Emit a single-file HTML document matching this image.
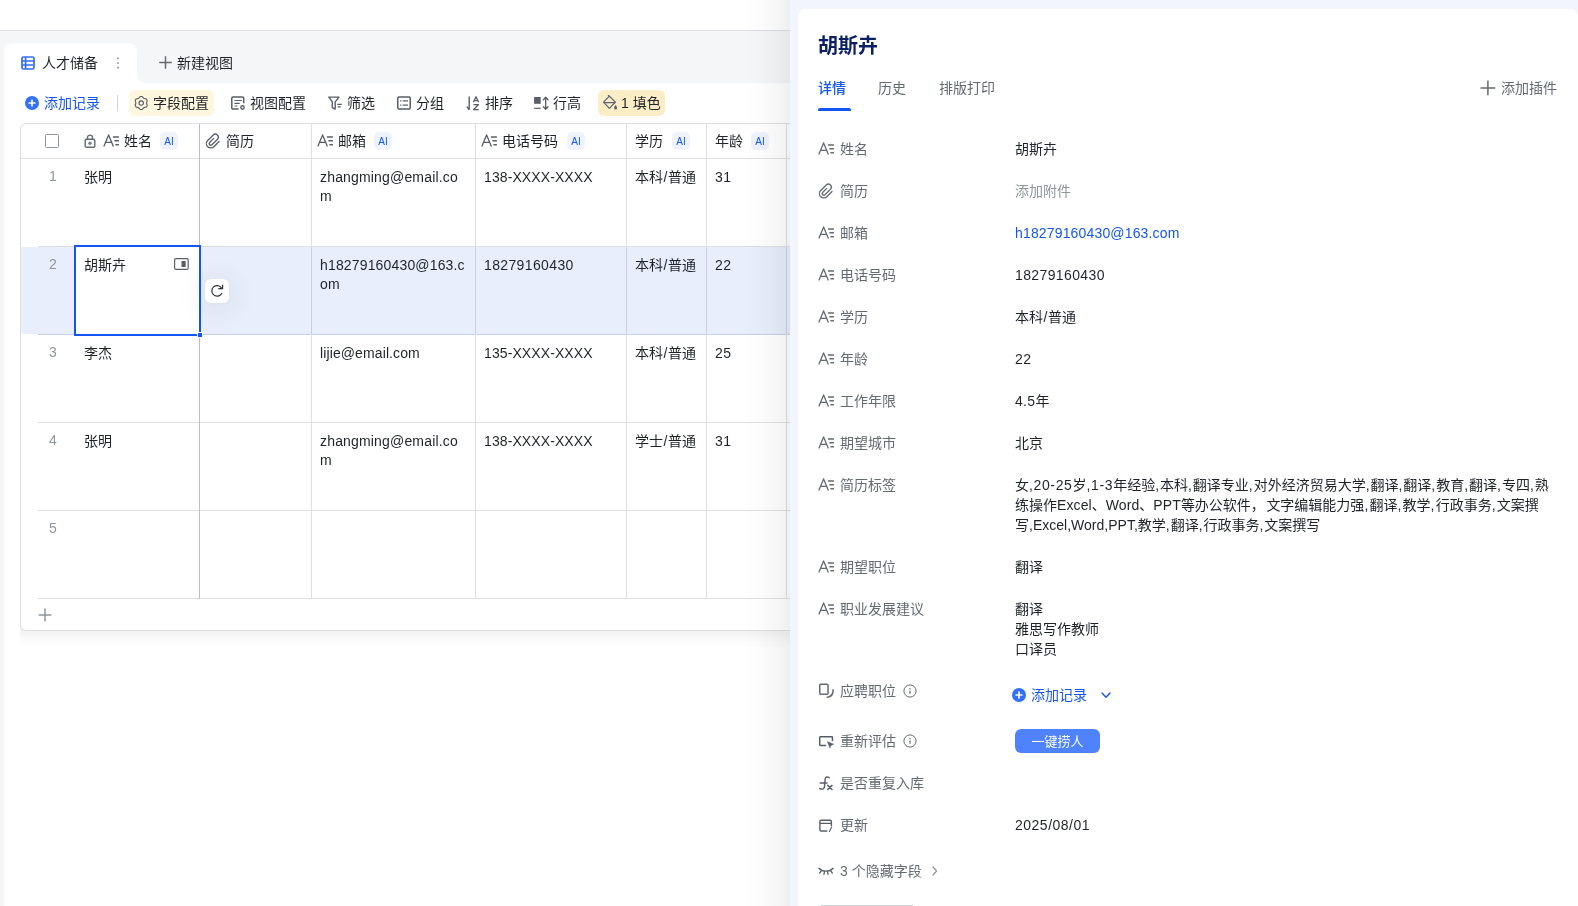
<!DOCTYPE html>
<html lang="zh-CN">
<head>
<meta charset="utf-8">
<title>人才储备</title>
<style>
*{box-sizing:border-box;margin:0;padding:0}
html,body{width:1578px;height:906px;overflow:hidden;background:#fff}
body{position:relative;font-family:"Liberation Sans","Noto Sans CJK SC",sans-serif;font-size:14px;line-height:20px;color:#1f2329}
#root{position:absolute;left:0;top:0;width:1578px;height:906px;will-change:transform}
.abs{position:absolute}
.t{position:absolute;white-space:nowrap;line-height:20px;height:20px}
svg{position:absolute;overflow:visible}
.btn{position:absolute;top:90px;height:26px;border-radius:6px}
.hl{position:absolute;height:1px;background:#dee0e3}
.vl{position:absolute;width:1px;background:#dee0e3}
.num{color:#8f959e;text-align:center;width:20px}
.ai{position:absolute;width:18px;height:18px;border-radius:5px;background:#eef3fe;color:#1456f0;font-size:10px;line-height:19px;text-align:center;top:132px}
.cell{position:absolute;line-height:19px;white-space:nowrap}
.lab{color:#646a73}
.val{color:#1f2329}
</style>
</head>
<body>
<div id="root">
<!-- base / grid view -->
<div class="abs" style="left:0px;top:30px;width:790px;height:1px;background:#dee0e3"></div>
<div class="abs" style="left:0px;top:31px;width:790px;height:52px;background:#f5f6f7"></div>
<div class="abs" style="left:0px;top:83px;width:4px;height:823px;background:#f5f6f7"></div>
<div class="abs" style="left:4px;top:43px;width:133px;height:40px;background:#fff;border-radius:8px 8px 0 0"></div>
<div class="abs" style="left:137px;top:75px;width:8px;height:8px;background:radial-gradient(circle at 100% 0,#f5f6f7 7.500px,#fff 8.500px)"></div>
<svg style="left:21px;top:56px" width="14" height="14" viewBox="0 0 14 14" fill="none" stroke="#336df4" stroke-width="1.7" ><rect x="1" y="1" width="12" height="12" rx="1.500"/><path d="M4.600 1v12M1 5h12M1 9h12"/></svg>
<div class="t" style="left:42px;top:53px;">人才储备</div>
<svg style="left:116px;top:57px" width="4" height="12" viewBox="0 0 4 12" fill="#737983"><circle cx="2" cy="1.300" r="0.850"/><circle cx="2" cy="6" r="0.850"/><circle cx="2" cy="10.700" r="0.850"/></svg>
<svg style="left:158.5px;top:56.4px" width="13" height="13" viewBox="0 0 13 13" fill="none" stroke="#646a73" stroke-width="1.5" ><path d="M6.500 0.200v12.600M0.200 6.500h12.600"/></svg>
<div class="t" style="left:177px;top:53px;">新建视图</div>
<!-- toolbar -->
<svg style="left:25px;top:96px" width="14" height="14" viewBox="0 0 14 14"><circle cx="7" cy="7" r="7" fill="#3370ff"/><path d="M7 4.200v5.600M4.200 7h5.600" stroke="#fff" stroke-width="1.700" stroke-linecap="round"/></svg>
<div class="t" style="left:44px;top:93px;color:#1456f0">添加记录</div>
<div class="abs" style="left:117px;top:95px;width:1px;height:16px;background:#d0d3d6"></div>
<div class="btn" style="left:129px;width:85px;background:#fef7dd"></div>
<svg style="left:134px;top:96px" width="14" height="14" viewBox="0 0 14 14" fill="none" stroke="#585e69" stroke-width="1.15" ><path d="M7.20 0.45L7.77 0.52L8.31 0.72L8.75 1.20L9.12 1.71L9.52 2.02L9.93 2.28L10.35 2.50L10.82 2.69L11.44 2.76L12.08 2.90L12.53 3.27L12.87 3.72L13.10 4.25L13.19 4.82L13.00 5.45L12.74 6.02L12.67 6.52L12.65 7.00L12.67 7.48L12.74 7.98L13.00 8.55L13.19 9.18L13.10 9.75L12.87 10.27L12.53 10.73L12.08 11.10L11.44 11.24L10.82 11.31L10.35 11.50L9.93 11.72L9.52 11.98L9.12 12.29L8.75 12.80L8.31 13.28L7.77 13.48L7.20 13.55L6.63 13.48L6.09 13.28L5.65 12.80L5.28 12.29L4.88 11.98L4.47 11.72L4.05 11.50L3.58 11.31L2.96 11.24L2.32 11.10L1.87 10.73L1.53 10.28L1.30 9.75L1.21 9.18L1.40 8.55L1.66 7.98L1.73 7.48L1.75 7.00L1.73 6.52L1.66 6.02L1.40 5.45L1.21 4.82L1.30 4.25L1.53 3.73L1.87 3.27L2.32 2.90L2.96 2.76L3.58 2.69L4.05 2.50L4.48 2.28L4.88 2.02L5.28 1.71L5.65 1.20L6.09 0.72L6.63 0.52Z" stroke-linejoin="round"/><circle cx="7.200" cy="7" r="2.200"/></svg>
<div class="t" style="left:153px;top:93px;">字段配置</div>
<svg style="left:231px;top:96px" width="14" height="14" viewBox="0 0 14 14" fill="none" stroke="#585e69" stroke-width="1.5" ><path d="M12.700 7.300V2.300a1.200 1.200 0 0 0-1.200-1.200H2a1.200 1.200 0 0 0-1.200 1.200v9.600a1.200 1.200 0 0 0 1.200 1.200h5.600"/><path d="M3.500 4.500h7.400M3.500 7.300h5.200M3.500 10h2.800" stroke-width="1.200"/><circle cx="11.500" cy="11.500" r="1.700" stroke-width="1.400"/></svg>
<div class="t" style="left:250px;top:93px;">视图配置</div>
<svg style="left:328px;top:96px" width="14" height="14" viewBox="0 0 14 14" fill="none" stroke="#585e69" stroke-width="1.4" stroke-linejoin="round"><path d="M0.800 1.100h10.200L7.200 5.900v7.200L4.300 11.600V5.900z"/><path d="M9.300 8.400h4.500M9.700 10.900h3" stroke-width="1.200"/></svg>
<div class="t" style="left:347px;top:93px;">筛选</div>
<svg style="left:397px;top:96px" width="14" height="14" viewBox="0 0 14 14" fill="none" stroke="#585e69" stroke-width="1.5" ><rect x="0.750" y="0.950" width="12.500" height="12.100" rx="1.200"/><path d="M3.100 4.900h1.300M5.700 4.900h5.300M3.100 9.100h1.300M5.700 9.100h5.300" stroke-width="1.300"/></svg>
<div class="t" style="left:416px;top:93px;">分组</div>
<svg style="left:466px;top:96px" width="14" height="15" viewBox="0 0 14 15" fill="none" stroke="#585e69" stroke-width="1.2" stroke-linejoin="round"><path d="M3.200 0.600v13.200M0.900 10.700l2.300 3.100" stroke-width="1.400"/><path d="M7.300 6.300l2.700-5.600 2.700 5.600M8.300 4.500h3.400" stroke-width="1.250"/><path d="M7.500 8.500h5L7.500 13.700h5.300" stroke-width="1.250"/></svg>
<div class="t" style="left:485px;top:93px;">排序</div>
<svg style="left:534px;top:96px" width="15" height="14" viewBox="0 0 15 14" fill="none" stroke="#585e69" stroke-width="1.3" ><rect x="0.100" y="1" width="6.600" height="6.800" fill="#585e69" stroke="none"/><path d="M0.100 12.300h6.600" stroke-width="1.200"/><path d="M11.700 1.400v11.600M9.400 3.700l2.300-2.500 2.300 2.500M9.400 10.700l2.300 2.500 2.300-2.500" stroke-linecap="round" stroke-linejoin="round"/></svg>
<div class="t" style="left:553px;top:93px;">行高</div>
<div class="btn" style="left:598px;width:67px;background:#fbeec6"></div>
<svg style="left:603px;top:95px" width="15" height="15" viewBox="0 0 15 15" fill="none" stroke="#5b6275" stroke-width="1.2" stroke-linejoin="round"><path d="M6.400 1.100l6 6.100-6 6.200L0.500 7.200z"/><path d="M5 0.200l1.600 1.600M0.900 7.600h11.200"/><path d="M12.600 10.100c.9 1.200 1.500 2 1.500 2.800a1.500 1.500 0 0 1-3 0c0-.8.600-1.600 1.500-2.800z" fill="#5b6275" stroke="none"/></svg>
<div class="t" style="left:621px;top:93px;">1 填色</div>
<!-- table -->
<div class="abs" style="left:20px;top:624px;width:770px;height:24px;background:linear-gradient(to bottom,rgba(31,35,41,.06) 25%,rgba(31,35,41,.03) 55%,rgba(31,35,41,0))"></div>
<div class="abs" style="left:20px;top:123px;width:780px;height:508px;border:1px solid #dee0e3;border-right:none;border-radius:6px 0 0 6px;background:#fff"></div>
<div class="abs" style="left:21px;top:247px;width:780px;height:87px;background:#e8eefc"></div>
<div class="hl" style="left:21px;top:158px;width:780px"></div>
<div class="hl" style="left:38px;top:246px;width:760px"></div>
<div class="hl" style="left:38px;top:334px;width:760px;background:#c8d0e6"></div>
<div class="hl" style="left:38px;top:422px;width:760px"></div>
<div class="hl" style="left:38px;top:510px;width:760px"></div>
<div class="hl" style="left:38px;top:598px;width:760px"></div>
<div class="vl" style="left:199px;top:124px;height:475px;background:#bbbfc4"></div>
<div class="vl" style="left:199px;top:247px;height:87px;background:#b3bbcf"></div>
<div class="vl" style="left:311px;top:124px;height:475px"></div>
<div class="vl" style="left:311px;top:247px;height:87px;background:#c8d0e6"></div>
<div class="vl" style="left:475px;top:124px;height:475px"></div>
<div class="vl" style="left:475px;top:247px;height:87px;background:#c8d0e6"></div>
<div class="vl" style="left:626px;top:124px;height:475px"></div>
<div class="vl" style="left:626px;top:247px;height:87px;background:#c8d0e6"></div>
<div class="vl" style="left:706px;top:124px;height:475px"></div>
<div class="vl" style="left:706px;top:247px;height:87px;background:#c8d0e6"></div>
<div class="vl" style="left:786px;top:124px;height:475px"></div>
<div class="vl" style="left:786px;top:247px;height:87px;background:#c8d0e6"></div>
<div class="abs" style="left:45px;top:134px;width:14px;height:14px;border:1.500px solid #8f959e;border-radius:1.500px;background:#fff"></div>
<svg style="left:84px;top:134px" width="12" height="14" viewBox="0 0 12 14" fill="none" stroke="#646a73" stroke-width="1.4" ><rect x="1.200" y="5.300" width="9.600" height="7.900" rx="1.300"/><path d="M3.500 5.300V3.600a2.500 2.500 0 0 1 5 0v1.700"/><circle cx="6" cy="9.300" r="1.700" fill="#7a808a" stroke="none"/></svg>
<svg style="left:103px;top:134px" width="17" height="13" viewBox="0 0 17 13" fill="none" stroke="#585e69" stroke-width="1.3" ><path d="M0.800 12.600L5.600 0.900l4.800 11.700M2.500 8.300h6.200" stroke-linejoin="round"/><path d="M9.900 3h6M11.400 6.800h4.500M12.400 10.700h3.500" stroke-width="1.600"/></svg>
<div class="t" style="left:124px;top:131px;">姓名</div>
<div class="ai" style="left:160px">AI</div>
<svg style="left:205px;top:133px" width="15" height="16" viewBox="0 0 15 16" fill="none" stroke="#585e69" stroke-width="1.3" stroke-linecap="round"><path d="M14 8.560L8.880 13.680A4.350 4.350 0 0 1 2.720 7.520L8.280 1.980A3 3 0 0 1 12.520 6.220L6.970 11.770A1.650 1.650 0 0 1 4.630 9.430L8.700 5.350"/></svg>
<div class="t" style="left:226px;top:131px;">简历</div>
<svg style="left:317px;top:134px" width="17" height="13" viewBox="0 0 17 13" fill="none" stroke="#585e69" stroke-width="1.3" ><path d="M0.800 12.600L5.600 0.900l4.800 11.700M2.500 8.300h6.200" stroke-linejoin="round"/><path d="M9.900 3h6M11.400 6.800h4.500M12.400 10.700h3.500" stroke-width="1.600"/></svg>
<div class="t" style="left:338px;top:131px;">邮箱</div>
<div class="ai" style="left:374px">AI</div>
<svg style="left:481px;top:134px" width="17" height="13" viewBox="0 0 17 13" fill="none" stroke="#585e69" stroke-width="1.3" ><path d="M0.800 12.600L5.600 0.900l4.800 11.700M2.500 8.300h6.200" stroke-linejoin="round"/><path d="M9.900 3h6M11.400 6.800h4.500M12.400 10.700h3.500" stroke-width="1.600"/></svg>
<div class="t" style="left:502px;top:131px;">电话号码</div>
<div class="ai" style="left:567px">AI</div>
<div class="t" style="left:635px;top:131px;">学历</div>
<div class="ai" style="left:672px">AI</div>
<div class="t" style="left:715px;top:131px;">年龄</div>
<div class="ai" style="left:751px">AI</div>
<div class="t num" style="left:43px;top:166px;">1</div>
<div class="cell" style="left:84px;top:168px">张明</div>
<div class="cell" style="left:320px;top:168px"><span style="letter-spacing:0.17px">zhangming@email.co<br>m</span></div>
<div class="cell" style="left:484px;top:168px"><span style="letter-spacing:0.1px">138-XXXX-XXXX</span></div>
<div class="cell" style="left:635px;top:168px">本科<span style="padding:0 .5px">/</span>普通</div>
<div class="cell" style="left:715px;top:168px"><span style="letter-spacing:0.4px">31</span></div>
<div class="t num" style="left:43px;top:254px;">2</div>
<div class="cell" style="left:320px;top:256px"><span style="letter-spacing:0.16px">h18279160430@163.c<br>om</span></div>
<div class="cell" style="left:484px;top:256px"><span style="letter-spacing:0.37px">18279160430</span></div>
<div class="cell" style="left:635px;top:256px">本科<span style="padding:0 .5px">/</span>普通</div>
<div class="cell" style="left:715px;top:256px"><span style="letter-spacing:0.4px">22</span></div>
<div class="t num" style="left:43px;top:342px;">3</div>
<div class="cell" style="left:84px;top:344px">李杰</div>
<div class="cell" style="left:320px;top:344px"><span style="letter-spacing:0.11px">lijie@email.com</span></div>
<div class="cell" style="left:484px;top:344px"><span style="letter-spacing:0.1px">135-XXXX-XXXX</span></div>
<div class="cell" style="left:635px;top:344px">本科<span style="padding:0 .5px">/</span>普通</div>
<div class="cell" style="left:715px;top:344px"><span style="letter-spacing:0.4px">25</span></div>
<div class="t num" style="left:43px;top:430px;">4</div>
<div class="cell" style="left:84px;top:432px">张明</div>
<div class="cell" style="left:320px;top:432px"><span style="letter-spacing:0.17px">zhangming@email.co<br>m</span></div>
<div class="cell" style="left:484px;top:432px"><span style="letter-spacing:0.1px">138-XXXX-XXXX</span></div>
<div class="cell" style="left:635px;top:432px">学士<span style="padding:0 .5px">/</span>普通</div>
<div class="cell" style="left:715px;top:432px"><span style="letter-spacing:0.4px">31</span></div>
<div class="t num" style="left:43px;top:518px;">5</div>
<div class="abs" style="left:74px;top:245px;width:127px;height:91px;border:2px solid #1456f0;background:#fff"></div>
<div class="cell" style="left:84px;top:256px">胡斯卉</div>
<svg style="left:174px;top:258px" width="15" height="12" viewBox="0 0 15 12" fill="none" stroke="#585e69" stroke-width="1.2" ><rect x="0.600" y="0.600" width="13.600" height="10.800" rx="1.500"/><rect x="7.500" y="3" width="4.200" height="6" fill="#585e69" stroke="none"/></svg>
<div class="abs" style="left:197px;top:332px;width:6px;height:6px;background:#1456f0;border:1px solid #fff"></div>
<div class="abs" style="left:205px;top:279px;width:24px;height:24px;border-radius:6px;background:#fff;box-shadow:0 4px 24px 8px rgba(31,35,41,.05),0 1px 4px rgba(31,35,41,.02)"></div>
<svg style="left:210px;top:284px" width="14" height="14" viewBox="0 0 14 14" fill="none" stroke="#2b2f36" stroke-width="1.2" stroke-linecap="round" stroke-linejoin="round"><path d="M11.740 9.420A5.300 5.300 0 1 1 11.900 4.610"/><path d="M12.600 1.100V4.700H8.800"/></svg>
<svg style="left:38px;top:608px" width="14" height="14" viewBox="0 0 14 14" fill="none" stroke="#8f959e" stroke-width="1.5" ><path d="M7 0.600v12.800M0.600 7h12.800"/></svg>
<!-- record detail panel -->
<div class="abs" style="left:730px;top:0px;width:60px;height:906px;background:linear-gradient(to right,rgba(31,35,41,0) 22%,rgba(31,35,41,.012) 45%,rgba(31,35,41,.035) 72%,rgba(31,35,41,.07))"></div>
<div class="abs" style="left:790px;top:0px;width:788px;height:906px;background:#f2f5fe"></div>
<div class="abs" style="left:798px;top:9px;width:780px;height:897px;background:#fff;border-radius:8px 8px 0 0"></div>
<div class="t" style="left:818px;top:32px;font-size:20px;line-height:28px;height:28px;font-weight:700;color:#0b1f66">胡斯卉</div>
<div class="t" style="left:818px;top:78px;color:#1456f0;font-weight:500">详情</div>
<div class="t lab" style="left:878px;top:78px;">历史</div>
<div class="t lab" style="left:939px;top:78px;">排版打印</div>
<div class="abs" style="left:818px;top:108px;width:33px;height:3px;background:#1456f0;border-radius:2px 2px 0 0"></div>
<svg style="left:1480px;top:80px" width="16" height="16" viewBox="0 0 16 16" fill="none" stroke="#646a73" stroke-width="1.5" ><path d="M7.900 0.500v14.800M0.500 7.900h14.800"/></svg>
<div class="t lab" style="left:1501px;top:78px;">添加插件</div>
<svg style="left:818px;top:142px" width="17" height="13" viewBox="0 0 17 13" fill="none" stroke="#646a73" stroke-width="1.3" ><path d="M0.800 12.600L5.600 0.900l4.800 11.700M2.500 8.300h6.200" stroke-linejoin="round"/><path d="M9.900 3h6M11.400 6.800h4.500M12.400 10.700h3.500" stroke-width="1.600"/></svg><div class="t lab" style="left:840px;top:139px;">姓名</div><div class="t val" style="left:1015px;top:139px;">胡斯卉</div>
<svg style="left:818px;top:183px" width="15" height="16" viewBox="0 0 15 16" fill="none" stroke="#646a73" stroke-width="1.3" stroke-linecap="round"><path d="M14 8.560L8.880 13.680A4.350 4.350 0 0 1 2.720 7.520L8.280 1.980A3 3 0 0 1 12.520 6.220L6.970 11.770A1.650 1.650 0 0 1 4.630 9.430L8.700 5.350"/></svg><div class="t lab" style="left:840px;top:181px;">简历</div><div class="t val" style="left:1015px;top:181px;color:#8f959e">添加附件</div>
<svg style="left:818px;top:226px" width="17" height="13" viewBox="0 0 17 13" fill="none" stroke="#646a73" stroke-width="1.3" ><path d="M0.800 12.600L5.600 0.900l4.800 11.700M2.500 8.300h6.200" stroke-linejoin="round"/><path d="M9.900 3h6M11.400 6.800h4.500M12.400 10.700h3.500" stroke-width="1.600"/></svg><div class="t lab" style="left:840px;top:223px;">邮箱</div><div class="t val" style="left:1015px;top:223px;color:#1456f0;letter-spacing:.16px">h18279160430@163.com</div>
<svg style="left:818px;top:268px" width="17" height="13" viewBox="0 0 17 13" fill="none" stroke="#646a73" stroke-width="1.3" ><path d="M0.800 12.600L5.600 0.900l4.800 11.700M2.500 8.300h6.200" stroke-linejoin="round"/><path d="M9.900 3h6M11.400 6.800h4.500M12.400 10.700h3.500" stroke-width="1.600"/></svg><div class="t lab" style="left:840px;top:265px;">电话号码</div><div class="t val" style="left:1015px;top:265px;letter-spacing:.38px">18279160430</div>
<svg style="left:818px;top:310px" width="17" height="13" viewBox="0 0 17 13" fill="none" stroke="#646a73" stroke-width="1.3" ><path d="M0.800 12.600L5.600 0.900l4.800 11.700M2.500 8.300h6.200" stroke-linejoin="round"/><path d="M9.900 3h6M11.400 6.800h4.500M12.400 10.700h3.500" stroke-width="1.600"/></svg><div class="t lab" style="left:840px;top:307px;">学历</div><div class="t val" style="left:1015px;top:307px;">本科<span style="padding:0 .5px">/</span>普通</div>
<svg style="left:818px;top:352px" width="17" height="13" viewBox="0 0 17 13" fill="none" stroke="#646a73" stroke-width="1.3" ><path d="M0.800 12.600L5.600 0.900l4.800 11.700M2.500 8.300h6.200" stroke-linejoin="round"/><path d="M9.900 3h6M11.400 6.800h4.500M12.400 10.700h3.500" stroke-width="1.600"/></svg><div class="t lab" style="left:840px;top:349px;">年龄</div><div class="t val" style="left:1015px;top:349px;letter-spacing:.4px">22</div>
<svg style="left:818px;top:394px" width="17" height="13" viewBox="0 0 17 13" fill="none" stroke="#646a73" stroke-width="1.3" ><path d="M0.800 12.600L5.600 0.900l4.800 11.700M2.500 8.300h6.200" stroke-linejoin="round"/><path d="M9.900 3h6M11.400 6.800h4.500M12.400 10.700h3.500" stroke-width="1.600"/></svg><div class="t lab" style="left:840px;top:391px;">工作年限</div><div class="t val" style="left:1015px;top:391px;"><span style="letter-spacing:.3px">4.5</span>年</div>
<svg style="left:818px;top:436px" width="17" height="13" viewBox="0 0 17 13" fill="none" stroke="#646a73" stroke-width="1.3" ><path d="M0.800 12.600L5.600 0.900l4.800 11.700M2.500 8.300h6.200" stroke-linejoin="round"/><path d="M9.900 3h6M11.400 6.800h4.500M12.400 10.700h3.500" stroke-width="1.600"/></svg><div class="t lab" style="left:840px;top:433px;">期望城市</div><div class="t val" style="left:1015px;top:433px;">北京</div>
<svg style="left:818px;top:478px" width="17" height="13" viewBox="0 0 17 13" fill="none" stroke="#646a73" stroke-width="1.3" ><path d="M0.800 12.600L5.600 0.900l4.800 11.700M2.500 8.300h6.200" stroke-linejoin="round"/><path d="M9.900 3h6M11.400 6.800h4.500M12.400 10.700h3.500" stroke-width="1.600"/></svg><div class="t lab" style="left:840px;top:475px;">简历标签</div><div class="abs val" style="left:1015px;top:475px;width:545px;line-height:20px;white-space:nowrap">女<span style="letter-spacing:0.63px">,20-25</span>岁<span style="letter-spacing:0.63px">,1-3</span>年经验<span style="letter-spacing:0.95px">,</span>本科<span style="letter-spacing:0.95px">,</span>翻译专业<span style="letter-spacing:0.95px">,</span>对外经济贸易大学<span style="letter-spacing:0.95px">,</span>翻译<span style="letter-spacing:0.95px">,</span>翻译<span style="letter-spacing:0.95px">,</span>教育<span style="letter-spacing:0.95px">,</span>翻译<span style="letter-spacing:0.95px">,</span>专四<span style="letter-spacing:0.95px">,</span>熟<br>练操作<span style="letter-spacing:0.1px">Excel</span>、<span style="letter-spacing:0.1px">Word</span>、<span style="letter-spacing:0.1px">PPT</span>等办公软件，<span style="margin-left:1.500px">文字编辑能力强<span style="letter-spacing:1.2px">,</span>翻译<span style="letter-spacing:1.2px">,</span>教学<span style="letter-spacing:1.2px">,</span>行政事务<span style="letter-spacing:1.2px">,</span>文案撰</span><br>写<span style="letter-spacing:0.01px">,Excel,Word,PPT,</span>教学<span style="letter-spacing:0.95px">,</span>翻译<span style="letter-spacing:0.95px">,</span>行政事务<span style="letter-spacing:0.95px">,</span>文案撰写</div>
<svg style="left:818px;top:560px" width="17" height="13" viewBox="0 0 17 13" fill="none" stroke="#646a73" stroke-width="1.3" ><path d="M0.800 12.600L5.600 0.900l4.800 11.700M2.500 8.300h6.200" stroke-linejoin="round"/><path d="M9.900 3h6M11.400 6.800h4.500M12.400 10.700h3.500" stroke-width="1.600"/></svg><div class="t lab" style="left:840px;top:557px;">期望职位</div><div class="t val" style="left:1015px;top:557px;">翻译</div>
<svg style="left:818px;top:602px" width="17" height="13" viewBox="0 0 17 13" fill="none" stroke="#646a73" stroke-width="1.3" ><path d="M0.800 12.600L5.600 0.900l4.800 11.700M2.500 8.300h6.200" stroke-linejoin="round"/><path d="M9.900 3h6M11.400 6.800h4.500M12.400 10.700h3.500" stroke-width="1.600"/></svg><div class="t lab" style="left:840px;top:599px;">职业发展建议</div><div class="abs val" style="left:1015px;top:599px;line-height:20px;white-space:nowrap">翻译<br>雅思写作教师<br>口译员</div>
<svg style="left:818px;top:683px" width="16" height="15" viewBox="0 0 16 15" fill="none" stroke="#646a73" stroke-width="1.5" ><rect x="1.750" y="1.250" width="8.300" height="10" rx="1"/><path d="M15.100 6.800C15.300 11.300 13 13.900 9.200 14.200" stroke-linecap="round"/></svg><div class="t lab" style="left:840px;top:681px;">应聘职位</div>
<svg style="left:903px;top:684px" width="14" height="14" viewBox="0 0 14 14" fill="none" stroke="#646a73" stroke-width="1" ><circle cx="7" cy="7" r="6.100"/><path d="M7 6.500v3.300" stroke-width="1.200"/><circle cx="7" cy="4.700" r="0.750" fill="#646a73" stroke="none"/></svg>
<svg style="left:1012px;top:688px" width="14" height="14" viewBox="0 0 14 14"><circle cx="7" cy="7" r="7" fill="#3370ff"/><path d="M7 4.200v5.600M4.200 7h5.600" stroke="#fff" stroke-width="1.700" stroke-linecap="round"/></svg><div class="t" style="left:1031px;top:685px;color:#1456f0">添加记录</div><svg style="left:1101px;top:692px" width="10" height="7" viewBox="0 0 10 7" fill="none" stroke="#1456f0" stroke-width="1.4" stroke-linecap="round" stroke-linejoin="round"><path d="M1 1l4 4.200L9 1"/></svg>
<svg style="left:818px;top:734px" width="16" height="14" viewBox="0 0 16 14" fill="none" stroke="#585e69" stroke-width="1.5" ><path d="M8.200 11.450H2.450a.7.7 0 0 1-.7-.7V3.450a.7.7 0 0 1 .7-.7H13.750a.7.7 0 0 1 .7.7V7.200"/><path d="M9.400 7.700l6.200 2.500-2.600 1.100-1.100 2.500z" fill="#585e69" stroke-width="0.600" stroke-linejoin="round"/></svg><div class="t lab" style="left:840px;top:731px;">重新评估</div>
<svg style="left:903px;top:734px" width="14" height="14" viewBox="0 0 14 14" fill="none" stroke="#646a73" stroke-width="1" ><circle cx="7" cy="7" r="6.100"/><path d="M7 6.500v3.300" stroke-width="1.200"/><circle cx="7" cy="4.700" r="0.750" fill="#646a73" stroke="none"/></svg>
<div class="abs" style="left:1015px;top:729px;width:85px;height:24px;border-radius:6px;background:#4e83fd;color:#fff;font-size:13px;line-height:25px;text-align:center">一键捞人</div>
<svg style="left:818px;top:775px" width="16" height="16" viewBox="0 0 16 16" fill="none" stroke="#585e69" stroke-width="1.4" stroke-linecap="round"><path d="M11.300 2.700C9.400 1.300 7.300 1.700 7.100 4.200L6.500 11.600C6.300 13.900 4.300 14.700 1.700 13.600M2.200 8h6.800"/><path d="M9.700 10.400l4.300 4.100M14 10.400l-4.300 4.100" stroke-width="1.500"/></svg><div class="t lab" style="left:840px;top:773px;">是否重复入库</div>
<svg style="left:818px;top:817px" width="16" height="16" viewBox="0 0 16 16" fill="none" stroke="#585e69" stroke-width="1.4" stroke-linecap="round" stroke-linejoin="round"><path d="M8.800 14H3.100a1.200 1.200 0 0 1-1.200-1.200V4.400a1.200 1.200 0 0 1 1.200-1.200h9.100a1.200 1.200 0 0 1 1.200 1.200v4.100M1.900 6.400h11.500"/><path d="M13.700 10l-2.300 4.600" stroke-width="1.100"/></svg><div class="t lab" style="left:840px;top:815px;">更新</div><div class="t val" style="left:1015px;top:815px;letter-spacing:.5px">2025/08/01</div>
<svg style="left:818px;top:866px" width="16" height="10" viewBox="0 0 16 10" fill="none" stroke="#585e69" stroke-width="1.3" stroke-linecap="round"><path d="M0.900 2.200c3.800 4 10.400 4 14.200 0M3.100 5.200L1.700 7M6.400 6.400L5.900 8.400M9.600 6.400l.5 2M12.900 5.200l1.400 1.800"/></svg><div class="t lab" style="left:840px;top:861px;">3 个隐藏字段</div><svg style="left:932px;top:866px" width="6" height="10" viewBox="0 0 6 10" fill="none" stroke="#8f959e" stroke-width="1.2" stroke-linecap="round" stroke-linejoin="round"><path d="M1 1l3.600 4L1 9"/></svg>
<div class="abs" style="left:821px;top:905px;width:92px;height:1px;background:#cdd0d4"></div>
</div>
</body>
</html>
